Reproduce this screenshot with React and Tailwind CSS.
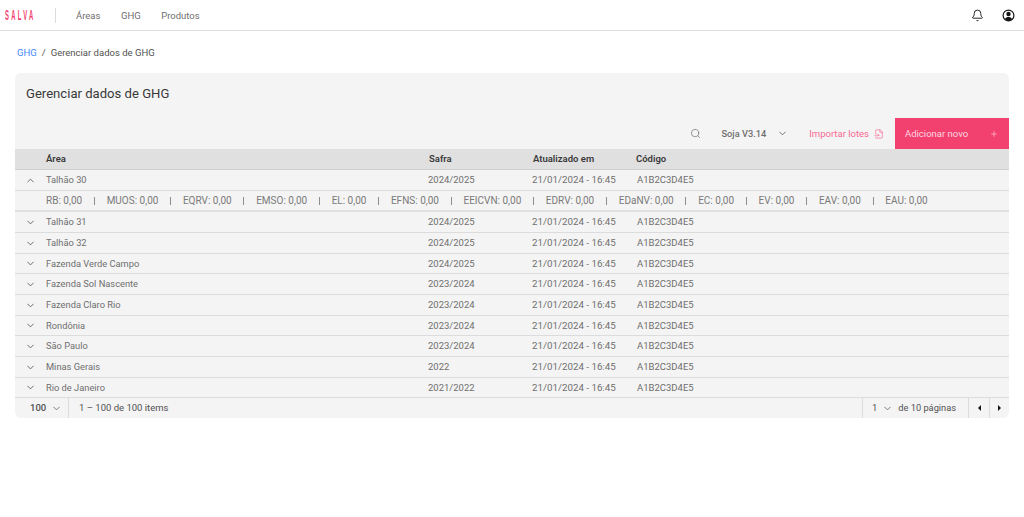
import React from "react";
import { Bell, ChevronDown, ChevronUp, Search, FileInput, Plus } from "lucide-react";

const rows = [
  ["Talhão 31", "2024/2025"],
  ["Talhão 32", "2024/2025"],
  ["Fazenda Verde Campo", "2024/2025"],
  ["Fazenda Sol Nascente", "2023/2024"],
  ["Fazenda Claro Rio", "2023/2024"],
  ["Rondônia", "2023/2024"],
  ["São Paulo", "2023/2024"],
  ["Minas Gerais", "2022"],
  ["Rio de Janeiro", "2021/2022"],
];

const metrics = ["RB", "MUOS", "EQRV", "EMSO", "EL", "EFNS", "EEICVN", "EDRV", "EDaNV", "EC", "EV", "EAV", "EAU"];

function Row({ name, safra, open, h }) {
  const Icon = open ? ChevronUp : ChevronDown;
  return (
    <div className={`grid grid-cols-[31px_382px_104px_104px_1fr] items-center border-b border-[#dcdcdc] text-[9.5px] leading-[12px] text-[#6f6f6f] ${h}`}>
      <div className="flex justify-center"><Icon size={11} strokeWidth={1.8} className="text-[#525252]" /></div>
      <div className="text-[9.3px] leading-[12px]">{name}</div>
      <div>{safra}</div>
      <div className="text-[9.75px] leading-[12px]">21/01/2024 - 16:45</div>
      <div className="pl-px">A1B2C3D4E5</div>
    </div>
  );
}

export default function App() {
  return (
    <div className="min-h-[517px] bg-white font-['Roboto','Noto_Sans',sans-serif] text-[#393939]">
      <header className="flex h-[31px] items-center border-b border-[#dcdcdc] pl-[5px] pr-[9px]">
        <div className="flex w-[50px] items-center">
          <span className="inline-block w-[30px] origin-left scale-x-[0.42] whitespace-nowrap font-['Liberation_Sans',sans-serif] text-[14px] font-bold tracking-[5.4px] text-[#f2416f]">SALVA</span>
        </div>
        <div className="h-[15px] w-px bg-[#dcdcdc]" />
        <nav className="ml-5 flex gap-[20.5px] pt-[2px] text-[9.5px] text-[#6f6f6f]">
          <span>Áreas</span>
          <span>GHG</span>
          <span>Produtos</span>
        </nav>
        <div className="ml-auto flex items-center gap-[18px] text-[#161616]">
          <Bell size={13} strokeWidth={1.7} />
          <svg width="13" height="13" viewBox="0 0 13 13" fill="none">
            <circle cx="6.5" cy="6.5" r="5.4" stroke="#161616" strokeWidth="1.2" />
            <circle cx="6.5" cy="5" r="2.2" fill="#161616" />
            <path d="M2.8 10.2C3.6 8.6 5 8 6.5 8s2.9.6 3.7 2.2A5.2 5.2 0 0 1 6.5 11.9a5.2 5.2 0 0 1-3.7-1.7z" fill="#161616" />
          </svg>
        </div>
      </header>

      <div className="flex items-center gap-[5px] pl-[17px] pt-[15px] text-[9.5px] leading-[14px]">
        <span className="text-[#4589ff]">GHG</span>
        <span className="text-[#525252]">/</span>
        <span className="text-[#525252]">Gerenciar dados de GHG</span>
      </div>

      <main className="mx-[15px] mt-[13px] w-[994px] overflow-hidden rounded-[6px] bg-[#f4f4f4]">
        <h1 className="h-[45px] pl-[11px] pt-[12px] text-[13.1px] leading-[18px] text-[#393939]">Gerenciar dados de GHG</h1>

        <div className="flex h-[31px] items-center justify-end">
          <Search size={11} strokeWidth={1.5} className="text-[#6f6f6f]" />
          <span className="ml-[20px] pt-[1px] text-[9.25px] font-medium text-[#6f6f6f]">Soja V3.14</span>
          <ChevronDown size={11} strokeWidth={1.7} className="ml-[11px] text-[#525252]" />
          <span className="ml-[21px] pt-[1px] text-[9.5px] text-[#f76a92]">Importar lotes</span>
          <FileInput size={10} strokeWidth={1.6} className="ml-[5px] text-[#f76a92]" />
          <button className="ml-[11px] flex h-[31px] w-[114px] items-center justify-between bg-[#f2416f] pl-[10px] pr-[11px] pt-[1px] text-[9.5px] text-[#ffd6e0]">
            <span>Adicionar novo</span>
            <Plus size={8} strokeWidth={1.8} />
          </button>
        </div>

        <div className="grid h-[21px] grid-cols-[31px_383px_104px_103px_1fr] items-center border-b border-[#cfcfcf] bg-[#e0e0e0] text-[9.5px] font-semibold text-[#393939]">
          <div />
          <div>Área</div>
          <div>Safra</div>
          <div>Atualizado em</div>
          <div>Código</div>
        </div>

        <Row name="Talhão 30" safra="2024/2025" open h="h-[21px]" />
        <div className="flex h-[21px] items-center border-b-2 border-[#e0e0e0] pl-[31px] text-[10px] text-[#7a7a7a]">
          {metrics.map((m, i) => (
            <React.Fragment key={m}>
              {i > 0 && <span className="mx-[11.75px] h-[8px] w-px bg-[#8d8d8d]" />}
              <span className="whitespace-nowrap">{m}: 0,00</span>
            </React.Fragment>
          ))}
        </div>
        {rows.map(([n, s], i) => (
          <Row key={n} name={n} safra={s} h={i % 3 === 2 ? "h-[20px]" : "h-[21px]"} />
        ))}

        <div className="flex h-[20px] items-center text-[9.5px] text-[#525252]">
          <div className="flex h-full w-[54px] items-center border-r border-[#dcdcdc] pl-[15px]">
            <span className="font-medium">100</span>
            <ChevronDown size={11} strokeWidth={1.6} className="ml-[5px]" />
          </div>
          <span className="ml-[10px]">1 – 100 de 100 items</span>
          <div className="ml-auto flex h-full items-center border-l border-[#dcdcdc] pl-[9px]">
            <span>1</span>
            <ChevronDown size={11} strokeWidth={1.6} className="ml-[5px]" />
            <span className="ml-[5px] mr-[12px] text-[9.25px]">de 10 páginas</span>
          </div>
          <div className="flex h-full w-[21px] items-center justify-center border-l border-[#dcdcdc]">
            <span className="h-0 w-0 border-y-[3px] border-r-[3px] border-y-transparent border-r-[#161616]" />
          </div>
          <div className="flex h-full w-[20px] items-center justify-center border-l border-[#dcdcdc]">
            <span className="h-0 w-0 border-y-[3px] border-l-[3px] border-y-transparent border-l-[#161616]" />
          </div>
        </div>
      </main>
    </div>
  );
}
